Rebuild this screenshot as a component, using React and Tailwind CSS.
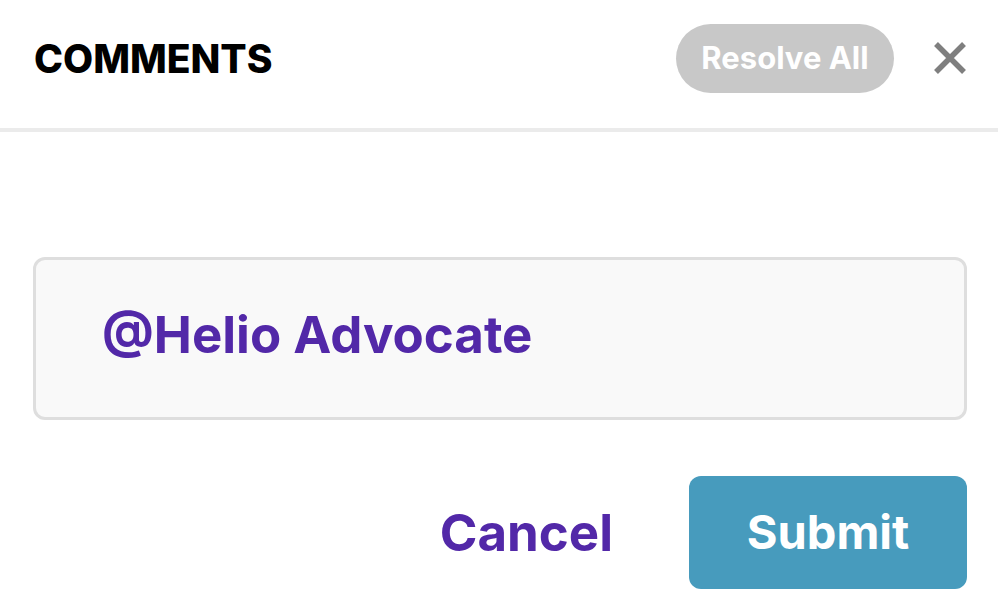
export default function App() {
  return (
    <div className="w-[998px] h-[602px] bg-white overflow-hidden" style={{ fontFamily: "Inter, 'Liberation Sans', sans-serif" }}>
      <div className="h-[128px] flex items-center justify-between pl-[34px] pr-[32px] pb-[12px]">
        <h1 className="text-[39px] leading-none font-extrabold text-black">COMMENTS</h1>
        <div className="flex items-center gap-[40px]">
          <button className="h-[69px] w-[218px] rounded-full bg-[#c8c8c8] text-white text-[31px] font-bold">
            Resolve All
          </button>
          <svg width="32" height="32" viewBox="0 0 32 32">
            <path d="M2 2 L30 30 M30 2 L2 30" stroke="#7f7f7f" strokeWidth="5.5" />
          </svg>
        </div>
      </div>
      <div className="h-[4px] bg-[#ebebeb]" />
      <div className="pl-[33px] pr-[31px] pt-[125px]">
        <div className="h-[163px] rounded-[12px] border-[3px] border-[#dedede] bg-[#f9f9f9] flex items-center pl-[66px] pb-[8px]">
          <span className="text-[51px] leading-none font-bold text-[#5228a8]">@Helio Advocate</span>
        </div>
        <div className="flex items-center justify-end mt-[56px] gap-[76px]">
          <button className="text-[51px] leading-none font-bold text-[#5228a8]">Cancel</button>
          <button className="w-[278px] h-[113px] rounded-[12px] bg-[#479bbd] text-white text-[47px] font-bold">
            Submit
          </button>
        </div>
      </div>
    </div>
  );
}
